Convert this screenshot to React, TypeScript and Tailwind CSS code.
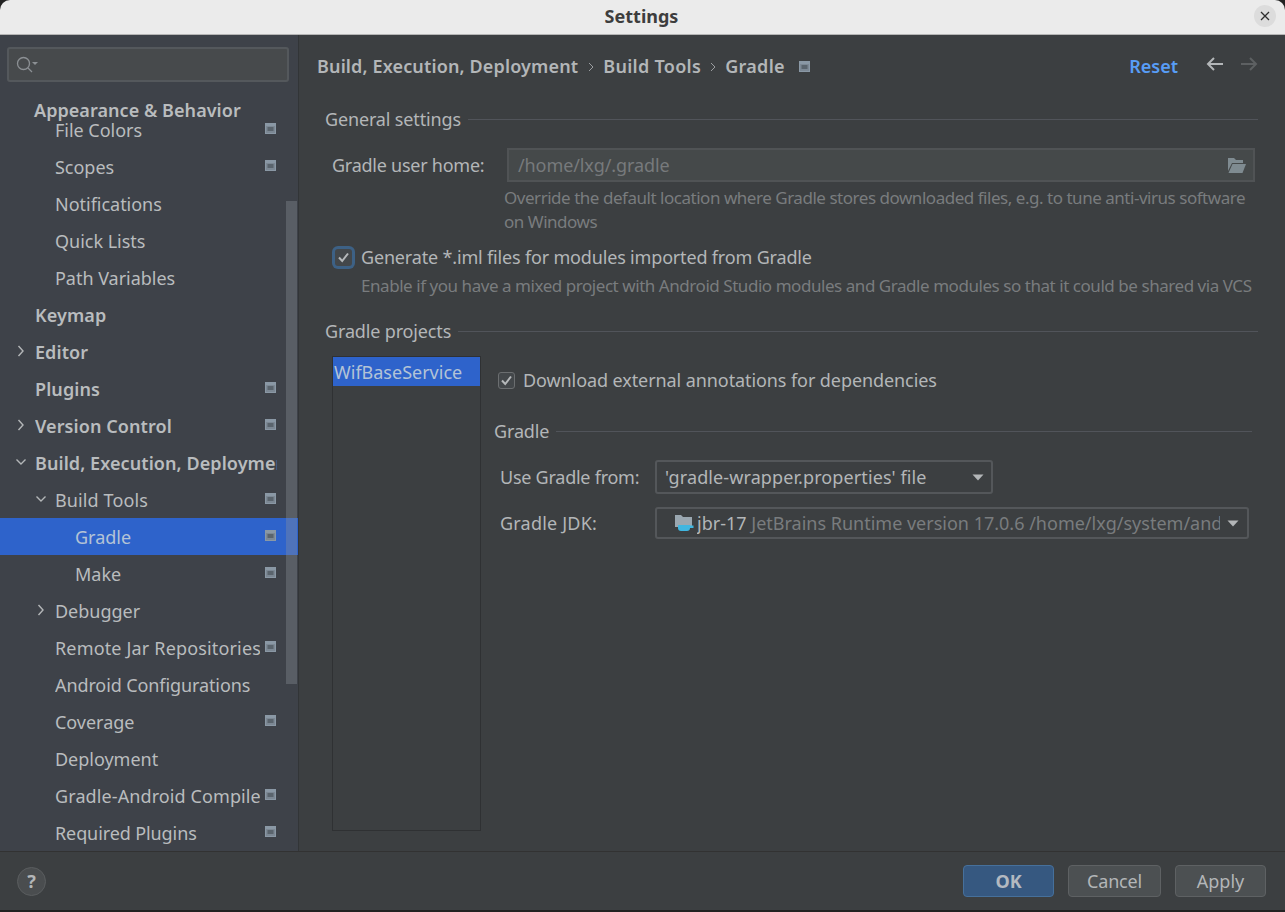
import React from "react";

const font = { fontFamily: '"Noto Sans", sans-serif' };

function Mod({ className = "" }: { className?: string }) {
  return (
    <svg width="11" height="11" viewBox="0 0 11 11" className={className}>
      <rect x="0" y="0" width="11" height="11" fill="#8a98a5" />
      <rect x="1" y="3" width="9" height="7" fill="#7c8894" />
      <rect x="2.5" y="4" width="6" height="4" fill="#5a646d" />
    </svg>
  );
}

function Chevron({ open }: { open?: boolean }) {
  return (
    <svg width="12" height="12" viewBox="0 0 12 12" fill="none" stroke="#b3b6b8" strokeWidth="1.4">
      {open ? <path d="M1.5 3.5 L6 8 L10.5 3.5" /> : <path d="M3.5 1 L8 6 L3.5 11" />}
    </svg>
  );
}

type Row = { t: string; x: number; bold?: boolean; mod?: boolean; ch?: "o" | "c"; sel?: boolean; tr?: string };
const rows: Row[] = [
  { t: "File Colors", x: 55, mod: true },
  { t: "Scopes", x: 55, mod: true },
  { t: "Notifications", x: 55 },
  { t: "Quick Lists", x: 55 },
  { t: "Path Variables", x: 55 },
  { t: "Keymap", x: 35, bold: true },
  { t: "Editor", x: 35, bold: true, ch: "c" },
  { t: "Plugins", x: 35, bold: true, mod: true },
  { t: "Version Control", x: 35, bold: true, mod: true, ch: "c" },
  { t: "Build, Execution, Deployment", x: 35, bold: true, ch: "o" },
  { t: "Build Tools", x: 55, mod: true, ch: "o", tr: "tracking-[0.12px]" },
  { t: "Gradle", x: 75, mod: true, sel: true },
  { t: "Make", x: 75, mod: true },
  { t: "Debugger", x: 55, ch: "c" },
  { t: "Remote Jar Repositories", x: 55, mod: true, tr: "tracking-[0.16px]" },
  { t: "Android Configurations", x: 55, tr: "tracking-[-0.1px]" },
  { t: "Coverage", x: 55, mod: true },
  { t: "Deployment", x: 55 },
  { t: "Gradle-Android Compiler", x: 55, mod: true, tr: "tracking-[0.1px]" },
  { t: "Required Plugins", x: 55, mod: true, tr: "tracking-[-0.1px]" },
];

function TreeRow({ r }: { r: Row }) {
  return (
    <div className={`relative flex h-[37px] items-center pt-[2px] text-[18px] ${r.sel ? "bg-[#2e63cb] text-[#b4c3d6]" : "text-[#b9bcbe]"}`}>
      {r.ch && (
        <span className="absolute top-[12px]" style={{ left: r.x - 20 }}>
          <Chevron open={r.ch === "o"} />
        </span>
      )}
      <span
        className={`overflow-hidden whitespace-nowrap ${r.bold ? "font-semibold tracking-[0.08px]" : r.tr ?? "tracking-[-0.02px]"}`}
        style={{ marginLeft: r.x, width: (r.mod ? 260 : 277) - r.x }}
      >
        {r.t}
      </span>
      {r.mod && <Mod className="absolute left-[265px] top-[12px]" />}
    </div>
  );
}

function Sep({ title, className = "" }: { title: string; className?: string }) {
  return (
    <div className={`flex items-center gap-[7px] text-[18px] text-[#b3b6b8] ${className}`}>
      <span className="whitespace-nowrap tracking-[-0.15px]">{title}</span>
      <div className="h-px flex-1 bg-[#51545a]" />
    </div>
  );
}

function Check({ focus }: { focus?: boolean }) {
  return (
    <div className={`flex items-center justify-center ${focus ? "h-[23px] w-[23px] rounded-[6px] bg-[#3d6185]" : "h-[19px] w-[19px]"}`}>
      <div className={`flex h-[17px] w-[17px] items-center justify-center rounded-[3px] bg-[#43474a] ${focus ? "" : "border border-[#6b6e70]"}`}>
        <svg width="13" height="13" viewBox="0 0 13 13" fill="none" stroke="#b5b8ba" strokeWidth="2">
          <path d="M2 6.5 L5.2 10 L11 2.5" />
        </svg>
      </div>
    </div>
  );
}

function Caret() {
  return (
    <svg width="12" height="7" viewBox="0 0 12 7" className="shrink-0">
      <path d="M0.5 0.5 H11.5 L6 6.5 Z" fill="#b3b6b8" />
    </svg>
  );
}

export default function App() {
  return (
    <div className="flex h-[912px] w-[1285px] flex-col overflow-hidden bg-[#222222]" style={font}>
      <div className="relative flex h-[35px] shrink-0 items-center justify-center rounded-t-[10px] border-b border-[#b5b5b5] bg-[#ebebeb] pb-[2px] pr-[2px]">
        <span className="text-[18px] font-bold text-[#3d3d3d]">Settings</span>
        <div className="absolute right-[9px] top-[5px] flex h-[22px] w-[22px] items-center justify-center rounded-full bg-[#dcdcdc]">
          <svg width="10" height="10" viewBox="0 0 10 10" stroke="#2e2e2e" strokeWidth="1.3">
            <path d="M1 1 L9 9 M9 1 L1 9" />
          </svg>
        </div>
      </div>

      <div className="flex h-[817px] shrink-0 border-b border-[#323232]">
        {/* Sidebar */}
        <div className="relative w-[299px] shrink-0 overflow-hidden border-r border-[#323537] bg-[#3e4249]">
          <div className="h-[76px] px-[7px] pt-[12px]">
            <div className="flex h-[35px] w-[282px] items-center rounded-[3px] border-2 border-[#54585c] bg-[#474a4c] pl-[7px]">
              <svg width="22" height="18" viewBox="0 0 22 18" fill="none" stroke="#8c9094" strokeWidth="1.3">
                <circle cx="7.5" cy="7.5" r="6" />
                <path d="M12 12 L16 16" />
                <path d="M16 6 H22 L19 9 Z" fill="#8c9094" stroke="none" />
              </svg>
            </div>
          </div>
          {rows.map((r) => (
            <TreeRow key={r.t} r={r} />
          ))}
          <div className="absolute left-0 top-[60px] h-[28px] w-[297px] bg-[#3e4249] pl-[34px] pt-[1px] text-[18px] font-semibold leading-[28px] tracking-[0.05px] text-[#b9bcbe]">
            Appearance &amp; Behavior
          </div>
          <div className="absolute left-[286px] top-[166px] h-[483px] w-[11px] bg-[rgba(140,145,155,0.35)]" />
        </div>

        {/* Main */}
        <div className="min-w-0 flex-1 bg-[#3c3f41] text-[18px] text-[#b3b6b8]">
          <div className="flex h-[63px] items-center pl-[18px] pr-[27px] font-semibold">
            <span className="tracking-[0.14px]">Build, Execution, Deployment</span>
            <svg width="6" height="10" viewBox="0 0 6 10" fill="none" stroke="#9a9da0" className="ml-[10px] mr-[9px]"><path d="M1 1 L5 5 L1 9" /></svg>
            <span className="tracking-[0.3px]">Build Tools</span>
            <svg width="6" height="10" viewBox="0 0 6 10" fill="none" stroke="#9a9da0" className="mx-[9px]"><path d="M1 1 L5 5 L1 9" /></svg>
            <span className="tracking-[0.3px]">Gradle</span>
            <Mod className="ml-[14px]" />
            <span className="ml-auto text-[#589df6]">Reset</span>
            <svg width="17" height="14" viewBox="0 0 17 14" fill="none" stroke="#b3b6b8" strokeWidth="2" className="ml-[28px] -translate-y-[3px]">
              <path d="M17 7 H2 M8 1 L2 7 L8 13" />
            </svg>
            <svg width="17" height="14" viewBox="0 0 17 14" fill="none" stroke="#5d6062" strokeWidth="2" className="ml-[18px] -translate-y-[3px]">
              <path d="M0 7 H15 M9 1 L15 7 L9 13" />
            </svg>
          </div>

          <div className="pl-[26px] pr-[27px] pt-[8px]">
            <Sep title="General settings" />

            <div className="mr-[3px] mt-[15px] flex items-center pl-[7px]">
              <span className="w-[175px] shrink-0 tracking-[-0.25px]">Gradle user home:</span>
              <div className="flex h-[34px] flex-1 items-center justify-between border-2 border-[#505355] bg-[#45494a] pl-[9px] pr-[7px] text-[#777a7c]">
                <span className="tracking-[-0.1px]">/home/lxg/.gradle</span>
                <svg width="19" height="15" viewBox="0 0 19 15">
                  <path d="M1 0 H7 L9 2 H16 V5 H5 L1 13 Z" fill="#7f8b91" />
                  <path d="M5.5 6 H19 L15.5 15 H1.5 Z" fill="#7f8b91" />
                </svg>
              </div>
            </div>
            <div className="ml-[179px] mt-[4px] text-[17px] leading-[24px] tracking-[-0.47px] text-[#797c7e]">
              Override the default location where Gradle stores downloaded files, e.g. to tune anti-virus software on Windows
            </div>

            <div className="mt-[10px] flex items-center pl-[7px]">
              <Check focus />
              <span className="ml-[6px] tracking-[-0.17px]">Generate *.iml files for modules imported from Gradle</span>
            </div>
            <div className="ml-[36px] mt-[3px] whitespace-nowrap text-[17px] leading-[24px] tracking-[-0.45px] text-[#797c7e]">
              Enable if you have a mixed project with Android Studio modules and Gradle modules so that it could be shared via VCS
            </div>

            <Sep title="Gradle projects" className="mt-[20px]" />

            <div className="mt-[11px] flex pl-[7px]">
              <div className="h-[475px] w-[149px] shrink-0 border border-[#2f3133] bg-[#3c3f41]">
                <div className="h-[29px] bg-[#2e63cb] pl-px text-[18px] leading-[30px] text-[#b4c3d6]">WifBaseService</div>
              </div>
              <div className="flex-1 pl-[13px] pr-[6px]">
                <div className="mt-[11px] flex items-center pl-[3px]">
                  <Check />
                  <span className="ml-[7px] tracking-[-0.085px]">Download external annotations for dependencies</span>
                </div>
                <Sep title="Gradle" className="mt-[24px]" />
                <div className="mt-[15px] flex items-center pl-[6px]">
                  <span className="w-[155px] shrink-0 tracking-[-0.25px]">Use Gradle from:</span>
                  <div className="flex h-[34px] w-[338px] items-center justify-between rounded-[3px] border-2 border-[#54575a] bg-[#3c3f41] pl-[8px] pr-[7px]">
                    <span className="tracking-[0.1px]">'gradle-wrapper.properties' file</span>
                    <Caret />
                  </div>
                </div>
                <div className="mt-[13px] flex items-center pl-[6px]">
                  <span className="w-[155px] shrink-0 tracking-[0.2px]">Gradle JDK:</span>
                  <div className="flex h-[32px] w-[594px] items-center rounded-[3px] border-2 border-[#54575a] bg-[#3c3f41] pl-[17px] pr-[8px]">
                    <svg width="20" height="18" viewBox="0 0 20 18" className="shrink-0">
                      <path d="M1 1 H7 L9 3 H18 V13 H1 Z" fill="#9aa7b0" />
                      <path d="M4 11 H16 V14 A3 3 0 0 1 13 17 H7 A3 3 0 0 1 4 14 Z" fill="#40b6e0" />
                      <path d="M16 11.5 H19.5 V14 H16 Z" fill="#40b6e0" />
                    </svg>
                    <span className="ml-[3px] w-[523px] overflow-hidden whitespace-nowrap">
                      jbr-17 <span className="text-[#797c7e]">JetBrains Runtime version 17.0.6 /home/lxg/system/android-studio/jbr</span>
                    </span>
                    <span className="ml-auto"><Caret /></span>
                  </div>
                </div>
              </div>
            </div>
          </div>
        </div>
      </div>

      {/* Footer */}
      <div className="flex h-[58px] shrink-0 items-center bg-[#3c3f41] pl-[17px] pr-[19px] text-[18px] text-[#b3b6b8]">
        <div className="flex h-[29px] w-[29px] items-center justify-center rounded-full border border-[#5a5d5f] bg-[#4a4d4f] font-bold text-[#b3b6b8]">?</div>
        <button className="ml-auto h-[32px] w-[91px] rounded-[4px] border border-[#46709b] bg-[#365880] font-bold text-[#b3b9c0]">OK</button>
        <button className="ml-[14px] h-[32px] w-[93px] rounded-[4px] border border-[#5e6163] bg-[#4c5052] tracking-[-0.2px]">Cancel</button>
        <button className="ml-[14px] h-[32px] w-[91px] rounded-[4px] border border-[#5e6163] bg-[#4c5052]">Apply</button>
      </div>
    </div>
  );
}
